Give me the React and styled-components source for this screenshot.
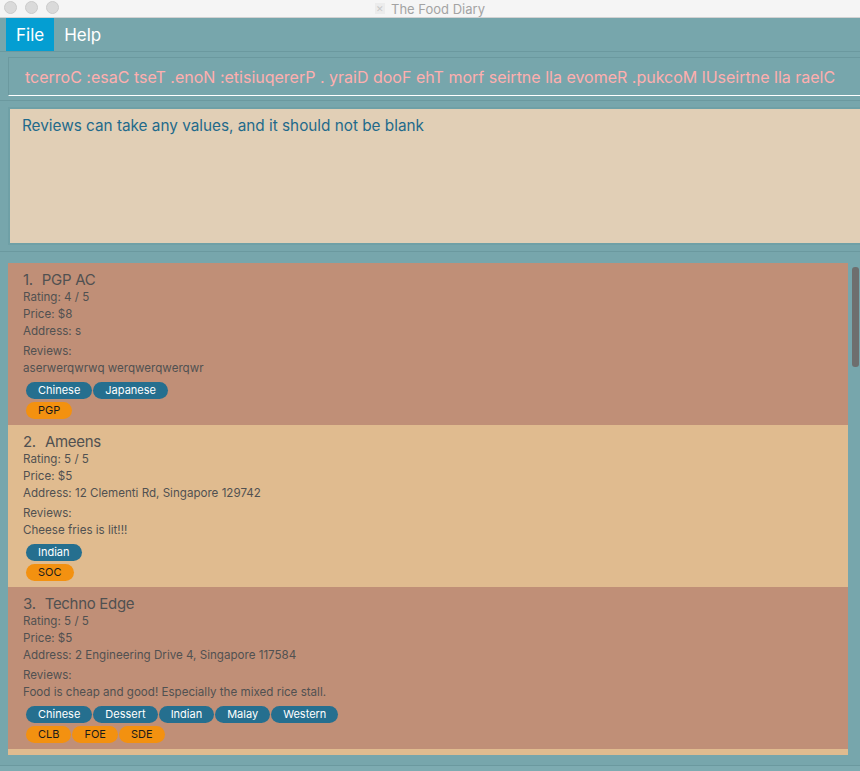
import React from 'react'
import styled, {createGlobalStyle} from 'styled-components'

const Global = createGlobalStyle`
  html, body {
    margin: 0;
    padding: 0;
    background: #77a6ac;
    font-family: Inter, "Noto Sans", sans-serif;
  }
`

const Window = styled.div`
  width: 860px;
  height: 771px;
  overflow: hidden;
  background: #77a6ac;
  display: flex;
  flex-direction: column;
`

const TitleBar = styled.div`
  height: 17px;
  flex: none;
  background: #f5f5f5;
  border-bottom: 1px solid #d2d2d2;
  display: flex;
  align-items: center;
  justify-content: center;
  position: relative;
  font-size: 13px;
  color: #a3a3a3;
  gap: 6px;
`

const Lights = styled.div`
  position: absolute;
  left: 4px;
  top: 1px;
  display: flex;
  gap: 8px;
`

const Light = styled.span`
  width: 11px;
  height: 11px;
  border-radius: 50%;
  background: #dadada;
  border: 1px solid #cbcbcb;
`

const AppIcon = styled.span`
  font-size: 9px;
  color: #c8c8c8;
  background: #ececec;
  padding: 0 1px;
`

const MenuBar = styled.div`
  height: 33px;
  flex: none;
  display: flex;
  padding-left: 6px;
  border-bottom: 1px solid #6b999f;
`

const MenuItem = styled.div`
  display: flex;
  align-items: center;
  padding: 0 10px;
  font-size: 17px;
  color: #fff;
  background: ${p => (p.active ? '#049ed2' : 'transparent')};
`

const CommandSection = styled.div`
  flex: none;
  padding: 5px 0 4px 8px;
  border-bottom: 1px solid #6b999f;
`

const CommandBox = styled.div`
  height: 37px;
  border-top: 1px solid #6b999f;
  border-left: 1px solid #6b999f;
  border-bottom: 1px solid #ffffff;
  display: flex;
  align-items: center;
  padding-left: 16px;
  font-size: 16px;
  color: #ffafaf;
  white-space: nowrap;
  overflow: hidden;
`

const ResultSection = styled.div`
  flex: none;
  padding: 6px 0 6px 8px;
  border-bottom: 1px solid #6b999f;
`

const ResultBox = styled.div`
  height: 120px;
  background: #e1cfb6;
  border: 2px solid #6fa0a6;
  border-right: none;
  padding: 7px 12px;
  font-size: 15.3px;
  color: #1f6a8b;
`

const ListSection = styled.div`
  flex: none;
  padding: 11px 0 10px 8px;
  border-bottom: 1px solid #6b999f;
  position: relative;
`

const ListViewport = styled.div`
  width: 840px;
  height: 492px;
  overflow: hidden;
`

const Thumb = styled.div`
  position: absolute;
  right: 1px;
  top: 15px;
  width: 7px;
  height: 100px;
  border-radius: 3px;
  background: #6e6e6e;
`

const Card = styled.div`
  height: 162px;
  box-sizing: border-box;
  padding: 8px 15px 0;
  background: ${p => (p.odd ? '#e0bb8f' : '#c08f77')};
  color: #515151;
`

const CardTitle = styled.div`
  font-size: 15px;
  letter-spacing: -0.3px;
  line-height: 18px;
  display: flex;
  gap: 9px;
`

const Line = styled.div`
  font-size: 11.6px;
  line-height: 17px;
  margin-top: ${p => p.gap || 0}px;
  white-space: nowrap;
`

const TagRow = styled.div`
  display: flex;
  gap: 1px;
  margin: ${p => p.top}px 0 0 3px;
`

const Tag = styled.span`
  height: 17px;
  line-height: 17px;
  padding: 0 12px;
  border-radius: 9px;
  font-size: 11px;
  background: ${p => (p.location ? '#f39110' : '#256f8f')};
  color: ${p => (p.location ? '#1a1a1a' : '#ffffff')};
`

const Status = styled.div`
  flex: 1;
  background: #7dabb1;
`

const entries = [
  {
    name: 'PGP AC',
    rating: '4 / 5',
    price: '$8',
    address: 's',
    review: 'aserwerqwrwq werqwerqwerqwr',
    cats: ['Chinese', 'Japanese'],
    locs: ['PGP'],
  },
  {
    name: 'Ameens',
    rating: '5 / 5',
    price: '$5',
    address: '12 Clementi Rd, Singapore 129742',
    review: 'Cheese fries is lit!!!',
    cats: ['Indian'],
    locs: ['SOC'],
  },
  {
    name: 'Techno Edge',
    rating: '5 / 5',
    price: '$5',
    address: '2 Engineering Drive 4, Singapore 117584',
    review: 'Food is cheap and good! Especially the mixed rice stall.',
    cats: ['Chinese', 'Dessert', 'Indian', 'Malay', 'Western'],
    locs: ['CLB', 'FOE', 'SDE'],
  },
]

function EntryCard({entry, index}) {
  return (
    <Card odd={index % 2 === 1}>
      <CardTitle>
        <span>{index + 1}.</span>
        <span>{entry.name}</span>
      </CardTitle>
      <Line>Rating: {entry.rating}</Line>
      <Line>Price: {entry.price}</Line>
      <Line>Address: {entry.address}</Line>
      <Line gap={3}>Reviews:</Line>
      <Line>{entry.review}</Line>
      <TagRow top={5}>
        {entry.cats.map(c => <Tag key={c}>{c}</Tag>)}
      </TagRow>
      <TagRow top={3}>
        {entry.locs.map(l => <Tag key={l} location>{l}</Tag>)}
      </TagRow>
    </Card>
  )
}

export default function App() {
  return (
    <Window>
      <Global />
      <TitleBar>
        <Lights>
          <Light />
          <Light />
          <Light />
        </Lights>
        <AppIcon>✕</AppIcon>
        The Food Diary
      </TitleBar>
      <MenuBar>
        <MenuItem active>File</MenuItem>
        <MenuItem>Help</MenuItem>
      </MenuBar>
      <CommandSection>
        <CommandBox>
          tcerroC :esaC tseT .enoN :etisiuqererP . yraiD dooF ehT morf seirtne lla evomeR .pukcoM lUseirtne lla raelC
        </CommandBox>
      </CommandSection>
      <ResultSection>
        <ResultBox>Reviews can take any values, and it should not be blank</ResultBox>
      </ResultSection>
      <ListSection>
        <ListViewport>
          {entries.map((e, i) => (
            <EntryCard key={e.name} entry={e} index={i} />
          ))}
          {/* next entry peeking in below the fold */}
          <Card odd />
        </ListViewport>
        <Thumb />
      </ListSection>
      <Status />
    </Window>
  )
}
